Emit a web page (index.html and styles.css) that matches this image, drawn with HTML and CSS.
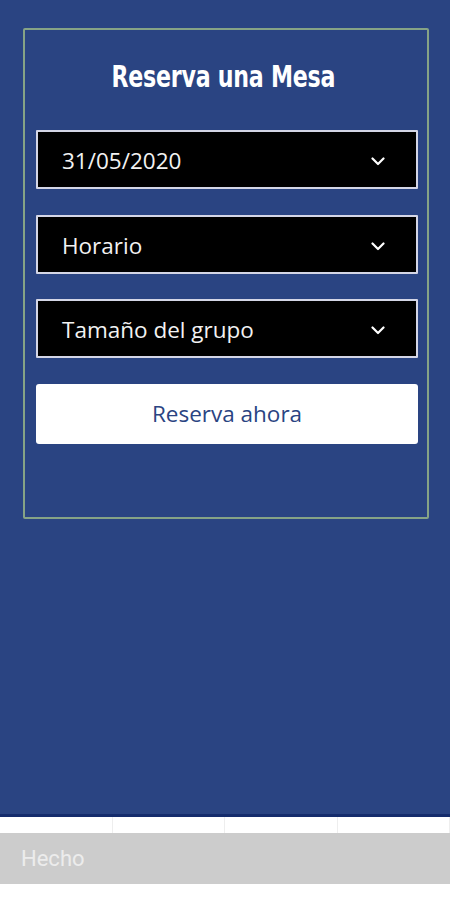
FILE: index.html
```html
<!DOCTYPE html>
<html lang="es">
<head>
  <meta charset="UTF-8">
  <title>Reserva una Mesa</title>
  <meta name="viewport" content="width=device-width,initial-scale=1.0">
  <link rel="stylesheet" href="styles.css">
</head>
<body>
<div class="screen">
  <div class="card">
    <h1 class="title"><span>Reserva una Mesa</span></h1>
    <div class="fields">
      <div class="select">
        <span>31/05/2020</span>
        <svg class="chev" width="14" height="9" viewBox="0 0 14 9"><polyline points="1.5,1.5 7,7 12.5,1.5" fill="none" stroke="#fff" stroke-width="2.2" stroke-linecap="round" stroke-linejoin="round"/></svg>
      </div>
      <div class="select">
        <span>Horario</span>
        <svg class="chev" width="14" height="9" viewBox="0 0 14 9"><polyline points="1.5,1.5 7,7 12.5,1.5" fill="none" stroke="#fff" stroke-width="2.2" stroke-linecap="round" stroke-linejoin="round"/></svg>
      </div>
      <div class="select">
        <span>Tamaño del grupo</span>
        <svg class="chev" width="14" height="9" viewBox="0 0 14 9"><polyline points="1.5,1.5 7,7 12.5,1.5" fill="none" stroke="#fff" stroke-width="2.2" stroke-linecap="round" stroke-linejoin="round"/></svg>
      </div>
      <div class="btn">Reserva ahora</div>
    </div>
  </div>
</div>
<div class="strip">
  <i></i><i></i><i></i><i></i>
</div>
<div class="done">Hecho</div>
<div class="foot"></div>
</body>
</html>
```

FILE: styles.css
```css
*{
  margin: 0;
  padding: 0;
  box-sizing: border-box;
}
body{
  width: 450px;
  height: 900px;
  display: flex;
  flex-direction: column;
  background: #fff;
  font-family: "Open Sans", "Noto Sans", sans-serif;
}
.screen{
  height: 817px;
  background: #2a4482;
  border-bottom: 3px solid #152c6c;
  padding: 28px 21px 0 23px;
}
.card{
  height: 491px;
  border: 2px solid #86a386;
  border-radius: 2px;
  padding: 27px 9px 0 11px;
}
.title{
  font-family: "DejaVu Sans Condensed", "DejaVu Sans", sans-serif;
  font-weight: bold;
  font-size: 30px;
  line-height: 40px;
  color: #fff;
  text-align: center;
  letter-spacing: -0.3px;
  margin-bottom: 33px;
  margin-right: 7px;
}
.title span{
  display: inline-block;
  transform: scaleX(0.82);
}
.fields{
  display: flex;
  flex-direction: column;
  gap: 25px;
}
.select{
  height: 59px;
  background: #000;
  border: 2px solid #d4d6e6;
  border-radius: 1px;
  display: flex;
  align-items: center;
  justify-content: space-between;
  padding: 0 31px 0 24px;
  color: #f2f2f2;
  font-size: 22.5px;
}
.select span{
  margin-top: 2px;
}
.chev{
  margin-top: 4px;
}
.select + .select{
  margin-top: 0.5px;
}
.btn{
  height: 60px;
  background: #fff;
  border-radius: 3px;
  display: flex;
  align-items: center;
  justify-content: center;
  color: #2a4482;
  font-size: 22.5px;
  margin-top: 0.5px;
}
.strip{
  height: 16px;
  background: #fff;
  display: flex;
}
.strip i{
  flex: 1;
  border-right: 1px solid #eeeeee;
}
.done{
  height: 51px;
  background: #cccccc;
  color: #ececec;
  font-family: Roboto, "Noto Sans", sans-serif;
  font-size: 22px;
  line-height: 51px;
  padding-left: 21px;
}
.foot{
  flex: 1;
  background: #fff;
}
```
